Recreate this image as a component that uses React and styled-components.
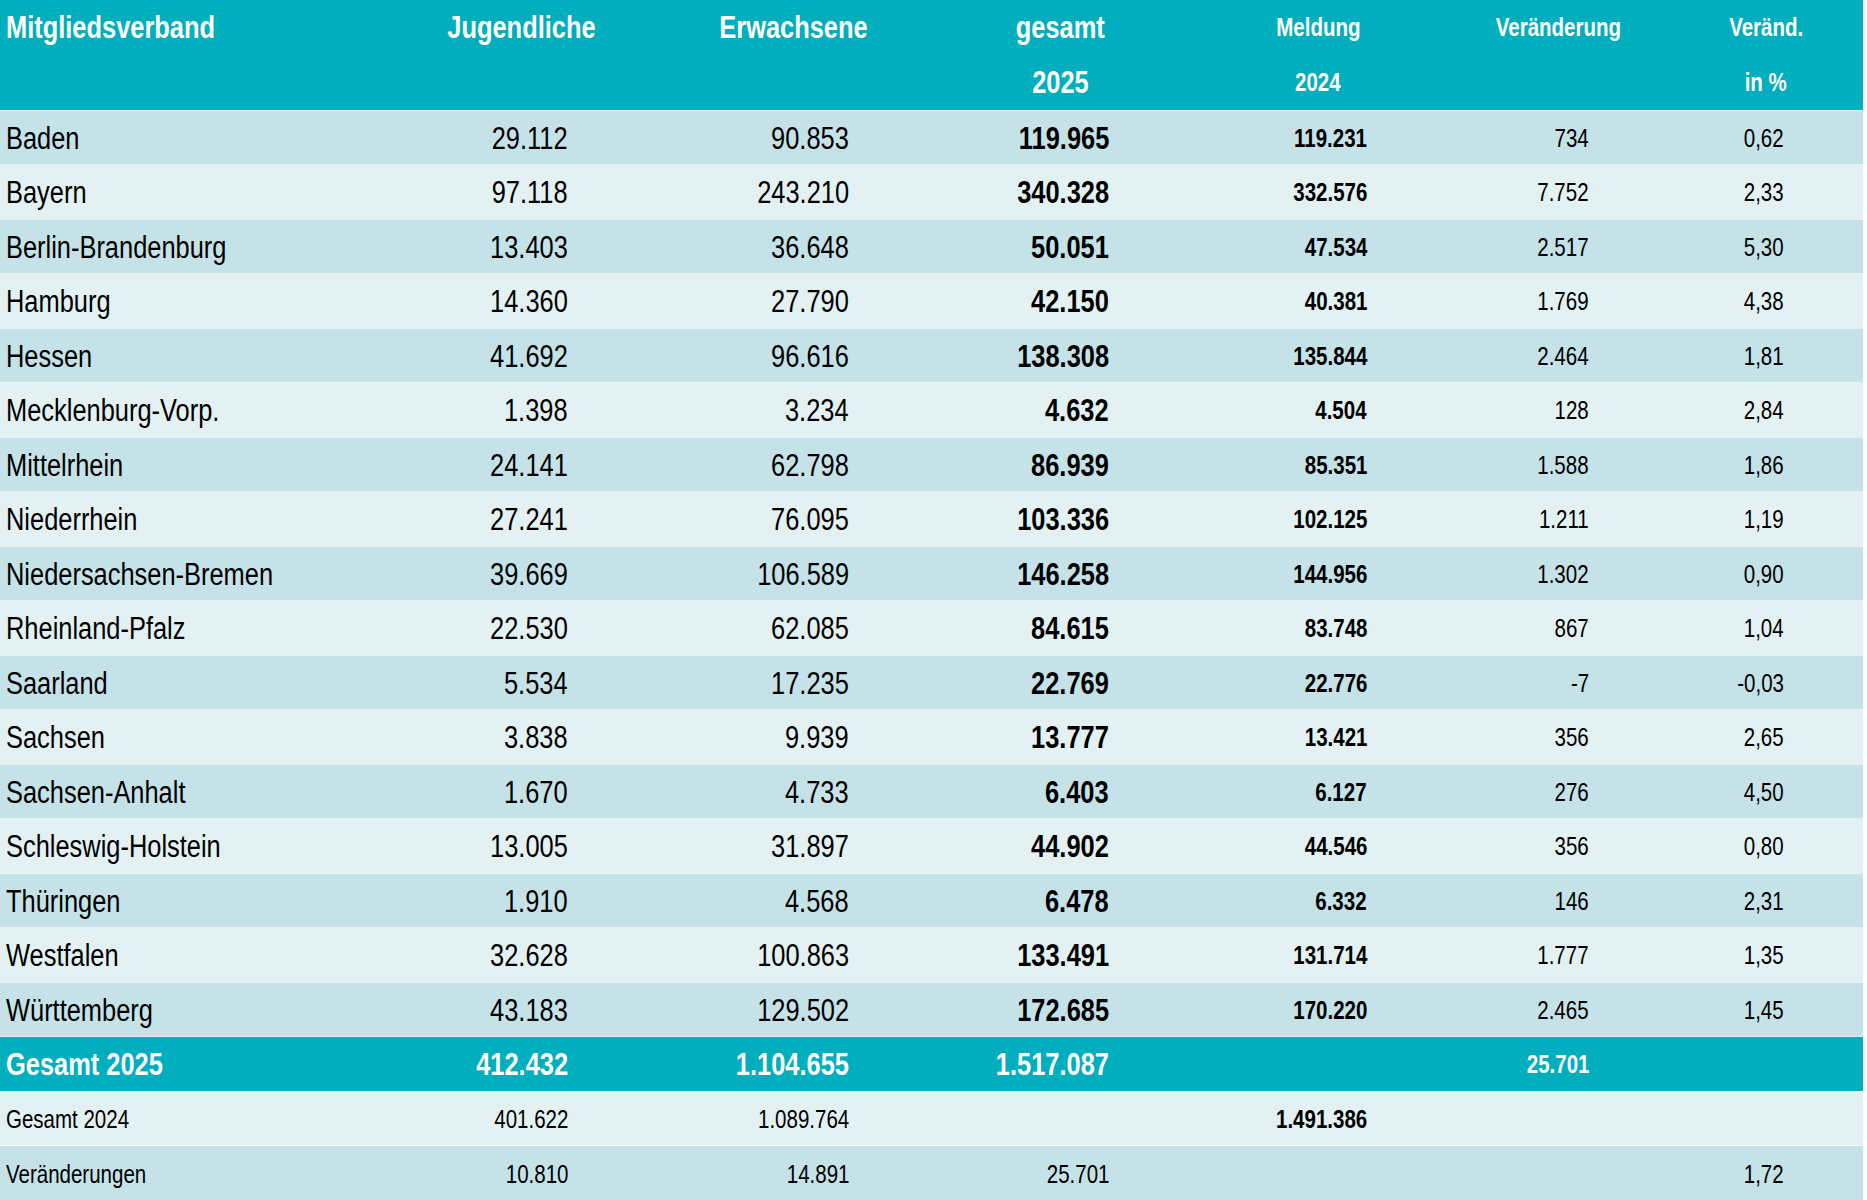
import React from "react";
import styled, { createGlobalStyle, css } from "styled-components";

const TEAL = "#00aebd";
const DARK_ROW = "#c4e2e7";
const LIGHT_ROW = "#e3f1f3";

const COLS = [387, 268, 276, 258, 258, 222, 194];
// right inset of the figures in each numeric column
const PADS = [87, 82, 80, 80, 80, 79];

const ROWS = [
  ["Baden", "29.112", "90.853", "119.965", "119.231", "734", "0,62"],
  ["Bayern", "97.118", "243.210", "340.328", "332.576", "7.752", "2,33"],
  ["Berlin-Brandenburg", "13.403", "36.648", "50.051", "47.534", "2.517", "5,30"],
  ["Hamburg", "14.360", "27.790", "42.150", "40.381", "1.769", "4,38"],
  ["Hessen", "41.692", "96.616", "138.308", "135.844", "2.464", "1,81"],
  ["Mecklenburg-Vorp.", "1.398", "3.234", "4.632", "4.504", "128", "2,84"],
  ["Mittelrhein", "24.141", "62.798", "86.939", "85.351", "1.588", "1,86"],
  ["Niederrhein", "27.241", "76.095", "103.336", "102.125", "1.211", "1,19"],
  ["Niedersachsen-Bremen", "39.669", "106.589", "146.258", "144.956", "1.302", "0,90"],
  ["Rheinland-Pfalz", "22.530", "62.085", "84.615", "83.748", "867", "1,04"],
  ["Saarland", "5.534", "17.235", "22.769", "22.776", "-7", "-0,03"],
  ["Sachsen", "3.838", "9.939", "13.777", "13.421", "356", "2,65"],
  ["Sachsen-Anhalt", "1.670", "4.733", "6.403", "6.127", "276", "4,50"],
  ["Schleswig-Holstein", "13.005", "31.897", "44.902", "44.546", "356", "0,80"],
  ["Thüringen", "1.910", "4.568", "6.478", "6.332", "146", "2,31"],
  ["Westfalen", "32.628", "100.863", "133.491", "131.714", "1.777", "1,35"],
  ["Württemberg", "43.183", "129.502", "172.685", "170.220", "2.465", "1,45"],
];

const GlobalStyle = createGlobalStyle`
  html, body {
    margin: 0;
    padding: 0;
    background: #ffffff;
  }
  body {
    font-family: "Liberation Sans Narrow", "Arial Narrow", "Liberation Sans", Arial, sans-serif;
    color: #000;
  }
`;

const Table = styled.table`
  width: 1863px;
  table-layout: fixed;
  border-collapse: collapse;
  border-spacing: 0;
`;

const HeadRow = styled.tr`
  height: 55px;
  background: ${TEAL};
`;

const HeadCell = styled.th`
  padding: 0 0 0 ${({ $left }) => ($left ? "6px" : "0")};
  text-align: ${({ $left }) => ($left ? "left" : "center")};
  vertical-align: middle;
  color: #fff;
  font-weight: 700;
  font-size: ${({ $small }) => ($small ? "25px" : "31px")};
  line-height: 1;
  white-space: nowrap;
`;

const Row = styled.tr`
  height: 54.5px;
  border-top: 1px solid rgba(255, 255, 255, 0.55);
  background: ${({ $tone }) =>
    $tone === "total" ? TEAL : $tone === "light" ? LIGHT_ROW : DARK_ROW};
  color: ${({ $tone }) => ($tone === "total" ? "#fff" : "#000")};

  ${PADS.map(
    (p, i) => css`
      & > td:nth-child(${i + 2}) {
        padding-right: ${p}px;
      }
    `
  )}
`;

const Cell = styled.td`
  padding: 2px 82px 0 0;
  text-align: right;
  vertical-align: middle;
  font-size: ${({ $small }) => ($small ? "25px" : "31px")};
  font-weight: ${({ $bold }) => ($bold ? 700 : 400)};
  line-height: 1;
  white-space: nowrap;

  ${({ $name }) =>
    $name &&
    css`
      padding: 2px 0 0 6px;
      text-align: left;
    `}
`;

// no narrow face installed: squeeze the regular face to Arial Narrow proportions
const Narrow = styled.span`
  display: inline-block;
  transform: scaleX(0.82);
  transform-origin: ${({ $origin }) => $origin || "right"} center;
`;

const toneFor = (i) => (i % 2 === 0 ? "dark" : "light");

const Head = ({ children, ...rest }) => (
  <HeadCell {...rest}>
    {children && <Narrow $origin={rest.$left ? "left" : "center"}>{children}</Narrow>}
  </HeadCell>
);

const Data = ({ children, ...rest }) => (
  <Cell {...rest}>
    {children && <Narrow $origin={rest.$name ? "left" : "right"}>{children}</Narrow>}
  </Cell>
);

const App = () => {
  return (
    <>
      <GlobalStyle />
      <Table>
        <colgroup>
          {COLS.map((w, i) => (
            <col key={i} style={{ width: `${w}px` }} />
          ))}
        </colgroup>
        <thead>
          <HeadRow>
            <Head $left>Mitgliedsverband</Head>
            <Head>Jugendliche</Head>
            <Head>Erwachsene</Head>
            <Head>gesamt</Head>
            <Head $small>Meldung</Head>
            <Head $small>Veränderung</Head>
            <Head $small>Veränd.</Head>
          </HeadRow>
          <HeadRow>
            <Head $left />
            <Head />
            <Head />
            <Head>2025</Head>
            <Head $small>2024</Head>
            <Head $small />
            <Head $small>in %</Head>
          </HeadRow>
        </thead>
        <tbody>
          {ROWS.map((r, i) => (
            <Row key={r[0]} $tone={toneFor(i)}>
              <Data $name>{r[0]}</Data>
              <Data>{r[1]}</Data>
              <Data>{r[2]}</Data>
              <Data $bold>{r[3]}</Data>
              <Data $bold $small>{r[4]}</Data>
              <Data $small>{r[5]}</Data>
              <Data $small>{r[6]}</Data>
            </Row>
          ))}
          <Row $tone="total">
            <Data $name $bold>Gesamt 2025</Data>
            <Data $bold>412.432</Data>
            <Data $bold>1.104.655</Data>
            <Data $bold>1.517.087</Data>
            <Data $small />
            <Data $bold $small>25.701</Data>
            <Data $small />
          </Row>
          <Row $tone="light">
            <Data $name $small>Gesamt 2024</Data>
            <Data $small>401.622</Data>
            <Data $small>1.089.764</Data>
            <Data $small />
            <Data $bold $small>1.491.386</Data>
            <Data $small />
            <Data $small />
          </Row>
          <Row $tone="dark">
            <Data $name $small>Veränderungen</Data>
            <Data $small>10.810</Data>
            <Data $small>14.891</Data>
            <Data $small>25.701</Data>
            <Data $small />
            <Data $small />
            <Data $small>1,72</Data>
          </Row>
        </tbody>
      </Table>
    </>
  );
};

export default App;
